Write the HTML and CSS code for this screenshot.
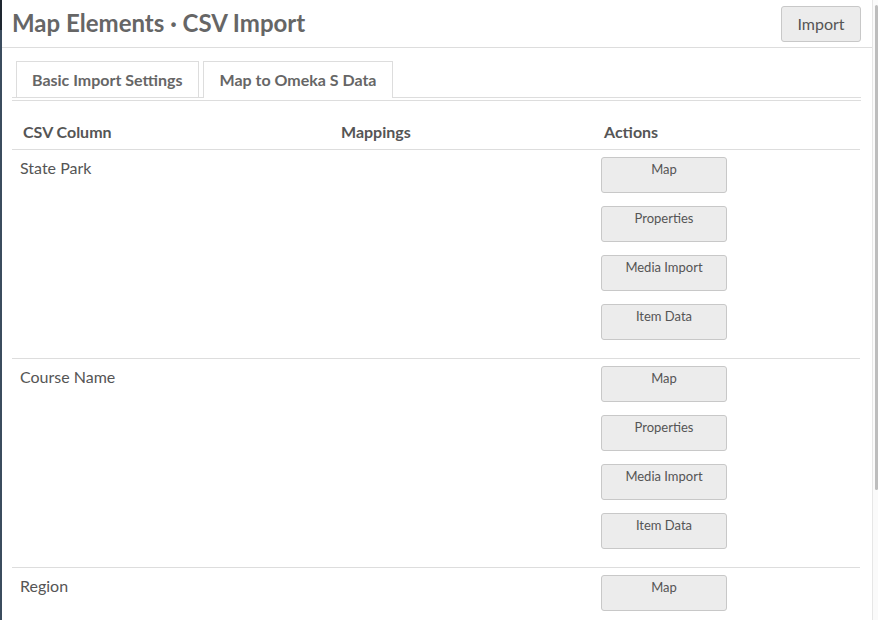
FILE: index.html
```html
<!DOCTYPE html>
<html>
<head>
<meta charset="utf-8">
<link rel="stylesheet" href="styles.css">
</head>
<body>
<div class="frame">
  <div class="edge"><div class="edge-top"></div></div>
  <main class="content">
    <header class="page-header">
      <h1 class="title">Map Elements · CSV Import</h1>
      <button class="btn-import">Import</button>
    </header>
    <ul class="tabs">
      <li class="tab">Basic Import Settings</li>
      <li class="tab active">Map to Omeka S Data</li>
    </ul>
    <section class="panel">
      <table class="mapping">
        <colgroup><col class="c1"><col class="c2"><col class="c3"></colgroup>
        <thead>
          <tr><th>CSV Column</th><th>Mappings</th><th>Actions</th></tr>
        </thead>
        <tbody>
          <tr>
            <td class="name">State Park</td>
            <td></td>
            <td><button class="act">Map</button><button class="act">Properties</button><button class="act">Media Import</button><button class="act">Item Data</button></td>
          </tr>
          <tr>
            <td class="name">Course Name</td>
            <td></td>
            <td><button class="act">Map</button><button class="act">Properties</button><button class="act">Media Import</button><button class="act">Item Data</button></td>
          </tr>
          <tr>
            <td class="name">Region</td>
            <td></td>
            <td><button class="act">Map</button></td>
          </tr>
        </tbody>
      </table>
    </section>
  </main>
  <div class="scrollbar"><div class="thumb"></div></div>
</div>
</body>
</html>
```
FILE: styles.css
```css
html, body {
  margin: 0;
  padding: 0;
  background: #fff;
  overflow: hidden;
}
body {
  font-family: Lato, "Liberation Sans", sans-serif;
  color: #555;
}
.frame {
  display: flex;
  width: 878px;
  height: 620px;
  overflow: hidden;
}
.edge {
  width: 2px;
  flex: none;
  background: #3b4c5e;
}
.edge-top {
  height: 30px;
  background: #1e2630;
}
.content {
  width: 870px;
  flex: none;
  overflow: hidden;
}
.scrollbar {
  flex: 1;
  border-left: 1px solid #e6e6e6;
  background: #fafafa;
  padding: 5px 1px 0 2px;
}
.thumb {
  width: 3px;
  height: 485px;
  background: #bdbdbd;
  border-radius: 2px;
}
.page-header {
  height: 47px;
  border-bottom: 1px solid #ddd;
  display: flex;
  align-items: center;
  justify-content: space-between;
  padding: 0 11px 0 10px;
  box-sizing: content-box;
}
.title {
  margin: 0;
  font-size: 24px;
  font-weight: 700;
  color: #666;
  line-height: 30px;
  position: relative;
  top: -1px;
}
.btn-import {
  font-family: Lato, "Liberation Sans", sans-serif;
  font-size: 16px;
  color: #555;
  width: 80px;
  height: 36px;
  background: #ececec;
  border: 1px solid #c8c8c8;
  border-radius: 3px;
  padding: 0;
}
.tabs {
  list-style: none;
  margin: 13px 11px 0 10px;
  padding: 0 0 0 4px;
  display: flex;
  gap: 4px;
  border-bottom: 1px solid #ddd;
  height: 36px;
}
.tab {
  border: 1px solid #ddd;
  border-bottom: none;
  padding: 0 15px;
  font-size: 16px;
  font-weight: 700;
  color: #666;
  line-height: 35px;
  height: 35px;
  background: #fff;
}
.tab.active {
  height: 36px;
  margin-bottom: -1px;
  padding: 0 16px;
  line-height: 36px;
}
.panel {
  margin: 2px 11px 0 10px;
  border-top: 1px solid #ddd;
}
.mapping {
  width: 848px;
  border-collapse: collapse;
  table-layout: fixed;
}
.c1 { width: 318px; }
.c2 { width: 263px; }
.mapping th {
  text-align: left;
  font-size: 16px;
  font-weight: 700;
  color: #555;
  line-height: 20px;
  padding: 21px 11px 7px;
  border-bottom: 1px solid #ddd;
}
.mapping td {
  vertical-align: top;
  padding: 7px 8px 5px;
  border-bottom: 1px solid #ddd;
  font-size: 16px;
  line-height: 20px;
  color: #555;
}
.mapping td.name {
  padding-top: 8px;
}
.act {
  width: 126px;
  height: 36px;
  margin: 0 0 13px;
  padding: 3px 0 0;
  box-sizing: border-box;
  background: #ececec;
  border: 1px solid #c8c8c8;
  border-radius: 3px;
  font-family: Lato, "Liberation Sans", sans-serif;
  font-size: 13px;
  line-height: 16px;
  color: #555;
  display: flex;
  justify-content: center;
  align-items: flex-start;
}
```
